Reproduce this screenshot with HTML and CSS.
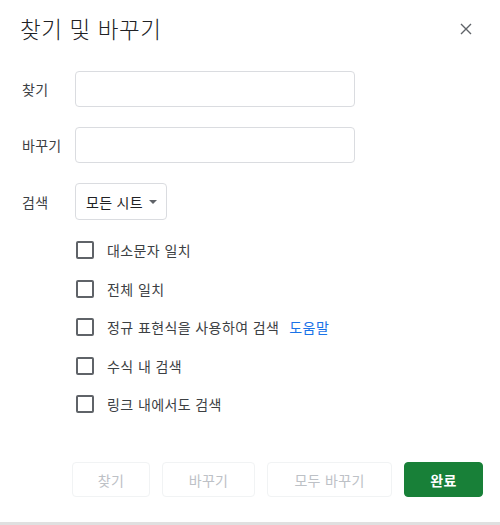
FILE: index.html
```html
<!DOCTYPE html>
<html lang="ko">
<head>
<meta charset="utf-8">
<link rel="stylesheet" href="styles.css">
</head>
<body>
<div class="dialog">
  <div class="header">
    <span class="title">찾기 및 바꾸기</span>
    <svg class="close" width="12" height="12" viewBox="0 0 12 12"><path d="M1 1L11 11M11 1L1 11" stroke="#5f6368" stroke-width="1.4" fill="none"/></svg>
  </div>
  <div class="form">
    <div class="field"><span class="label">찾기</span><div class="input"></div></div>
    <div class="field"><span class="label">바꾸기</span><div class="input"></div></div>
    <div class="field select-field"><span class="label">검색</span>
      <div class="select"><span>모든 시트</span><svg width="8" height="4" viewBox="0 0 8 4"><path d="M0 0H8L4 4Z" fill="#5f6368"/></svg></div>
    </div>
    <div class="options">
      <div class="option"><span class="box"></span><span>대소문자 일치</span></div>
      <div class="option"><span class="box"></span><span>전체 일치</span></div>
      <div class="option"><span class="box"></span><span>정규 표현식을 사용하여 검색</span><span class="link">도움말</span></div>
      <div class="option"><span class="box"></span><span>수식 내 검색</span></div>
      <div class="option"><span class="box"></span><span>링크 내에서도 검색</span></div>
    </div>
  </div>
  <div class="footer">
    <div class="btn w1">찾기</div>
    <div class="btn w2">바꾸기</div>
    <div class="btn w3">모두 바꾸기</div>
    <div class="btn primary">완료</div>
  </div>
</div>
<div class="strip"></div>
</body>
</html>
```
FILE: styles.css
```css
html, body {
  margin: 0;
  padding: 0;
  background: #fff;
  font-family: "Noto Sans CJK KR", "Noto Sans", sans-serif;
  color: #3c4043;
}
.dialog {
  width: 500px;
  height: 522px;
  box-sizing: border-box;
  display: flex;
  flex-direction: column;
}
.header {
  height: 58px;
  display: flex;
  align-items: center;
  justify-content: space-between;
  padding: 0 28px 0 20px;
}
.title {
  font-size: 22.5px;
  font-weight: 300;
  letter-spacing: 0.6px;
  color: #202124;
  line-height: 1;
  margin-top: -1px;
}
.close { display: block; }
.form {
  padding: 13px 0 0 22px;
}
.field {
  display: flex;
  align-items: center;
  height: 36px;
  margin-bottom: 20px;
}
.field.select-field { height: 37px; margin-bottom: 11px; }
.label {
  width: 53px;
  font-size: 14px;
  letter-spacing: 0.3px;
  color: #3c4043;
}
.input {
  width: 280px;
  height: 36px;
  box-sizing: border-box;
  border: 1px solid #dadce0;
  border-radius: 4px;
}
.select {
  width: 92px;
  height: 37px;
  box-sizing: border-box;
  border: 1px solid #dadce0;
  border-radius: 4px;
  display: flex;
  align-items: center;
  padding-left: 10px;
  gap: 6px;
  font-size: 14px;
  letter-spacing: 0.3px;
  color: #202124;
}
.options {
  padding-left: 54px;
}
.option {
  height: 38.5px;
  display: flex;
  align-items: center;
  font-size: 14px;
  letter-spacing: 0.4px;
  color: #3c4043;
}
.box {
  width: 18px;
  height: 18px;
  box-sizing: border-box;
  border: 2px solid #5f6368;
  border-radius: 2px;
  margin-right: 13px;
  flex: none;
}
.link {
  color: #1a73e8;
  margin-left: 10px;
}
.footer {
  margin-top: auto;
  margin-bottom: 25px;
  display: flex;
  justify-content: flex-end;
  gap: 12px;
  padding-right: 17px;
}
.btn {
  height: 35px;
  box-sizing: border-box;
  border: 1px solid #f1f3f4;
  border-radius: 4px;
  display: flex;
  align-items: center;
  justify-content: center;
  font-size: 14px;
  letter-spacing: 0.3px;
  color: #bdc1c6;
}
.w1 { width: 78px; }
.w2 { width: 93px; }
.w3 { width: 125px; }
.primary {
  width: 79px;
  background: #188038;
  border-color: #188038;
  color: #fff;
  font-weight: 700;
}
.strip {
  height: 3px;
  background: #e0e0e0;
}
```
